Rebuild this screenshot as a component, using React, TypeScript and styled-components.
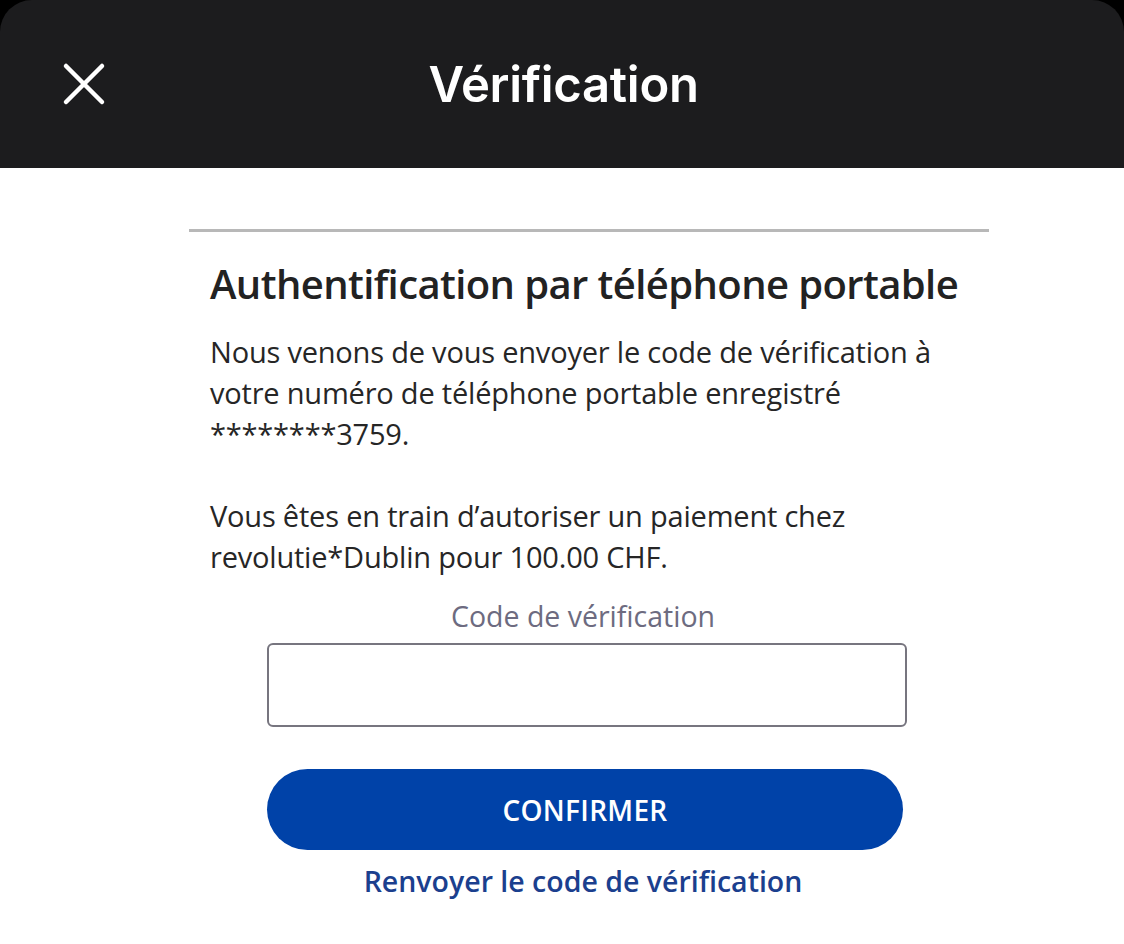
import React from "react";
import styled, { createGlobalStyle } from "styled-components";

const Global = createGlobalStyle`
  html, body { margin: 0; padding: 0; background: #000; }
  body { font-family: "Open Sans", "Liberation Sans", sans-serif; }
  * { box-sizing: border-box; }
`;

const Screen = styled.div`
  width: 1124px;
  height: 944px;
  background: #000;
  display: flex;
  flex-direction: column;
  overflow: hidden;
`;

const Header = styled.header`
  height: 168px;
  flex: none;
  background: #1c1c1e;
  border-radius: 32px 32px 0 0;
  display: grid;
  grid-template-columns: 168px 1fr 168px;
  align-items: center;
`;

const CloseButton = styled.button`
  border: 0;
  background: none;
  padding: 0;
  margin-left: 60px;
  width: 48px;
  height: 48px;
  display: flex;
  align-items: center;
  justify-content: center;
  cursor: pointer;
`;

const Title = styled.h1`
  margin: 0 0 0 3px;
  text-align: center;
  color: #fff;
  font-family: Inter, "Liberation Sans", sans-serif;
  font-weight: 600;
  font-size: 49px;
  letter-spacing: -0.3px;
`;

const Body = styled.main`
  flex: 1;
  background: #fff;
  padding-top: 61px;
`;

const Column = styled.section`
  width: 800px;
  margin-left: 189px;
  display: flex;
  flex-direction: column;
`;

const Divider = styled.hr`
  margin: 0;
  border: 0;
  height: 3px;
  background: #b8b8b8;
`;

const Content = styled.div`
  padding: 0 21px;
  display: flex;
  flex-direction: column;
`;

const Heading = styled.h2`
  margin: 24px 0 0;
  font-size: 40px;
  font-weight: 600;
  color: #222;
  line-height: 56px;
  letter-spacing: -0.6px;
`;

const Paragraph = styled.p<{ $gap: number }>`
  margin: ${(p) => p.$gap}px 0 0;
  font-size: 29px;
  line-height: 41px;
  color: #262626;
  letter-spacing: -0.2px;
`;

const Form = styled.div`
  width: 640px;
  margin: 19px 0 0 78px;
  display: flex;
  flex-direction: column;
  align-items: stretch;
`;

const Label = styled.label`
  text-align: center;
  font-size: 28.5px;
  line-height: 41px;
  color: #6d6b80;
  margin-bottom: 6px;
  margin-right: 8px;
`;

const Input = styled.input`
  height: 84px;
  border: 2px solid #77757f;
  border-radius: 6px;
  background: #fff;
  font-size: 28px;
  padding: 0 16px;
  outline: none;
`;

const PrimaryButton = styled.button`
  margin-top: 42px;
  width: 636px;
  height: 81px;
  border: 0;
  border-radius: 41px;
  background: #0042a8;
  color: #fff;
  font-family: "Open Sans", sans-serif;
  font-weight: 600;
  font-size: 28px;
  letter-spacing: 0.3px;
  cursor: pointer;
`;

const LinkButton = styled.a`
  margin-top: 11px;
  text-align: center;
  font-weight: 600;
  font-size: 28.5px;
  line-height: 40px;
  color: #1b3f8e;
  text-decoration: none;
  margin-right: 8px;
`;

export default function App() {
  return (
    <>
      <Global />
      <Screen>
        <Header>
          <CloseButton aria-label="Fermer">
            <svg width="44" height="44" viewBox="0 0 44 44">
              <path d="M4 4 L40 40 M40 4 L4 40" stroke="#fff" strokeWidth="4.5" strokeLinecap="round" />
            </svg>
          </CloseButton>
          <Title>Vérification</Title>
          <div />
        </Header>
        <Body>
          <Column>
            <Divider />
            <Content>
              <Heading>Authentification par téléphone portable</Heading>
              <Paragraph $gap={19}>
                Nous venons de vous envoyer le code de vérification à votre numéro de téléphone portable enregistré ********3759.
              </Paragraph>
              <Paragraph $gap={41}>
                Vous êtes en train d’autoriser un paiement chez revolutie*Dublin pour 100.00 CHF.
              </Paragraph>
            </Content>
            <Form>
              <Label htmlFor="code">Code de vérification</Label>
              <Input id="code" type="text" />
              <PrimaryButton>CONFIRMER</PrimaryButton>
              <LinkButton href="#">Renvoyer le code de vérification</LinkButton>
            </Form>
          </Column>
        </Body>
      </Screen>
    </>
  );
}
